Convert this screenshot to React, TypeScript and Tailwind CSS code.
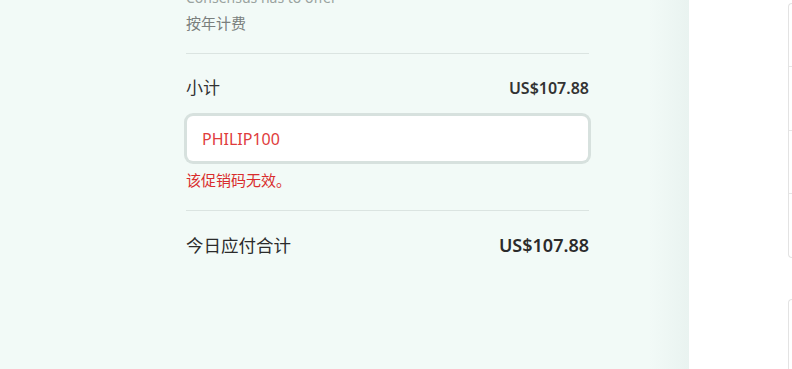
export default function App() {
  const font = { fontFamily: '"Noto Sans", "Noto Sans CJK SC", sans-serif' }

  return (
    <div className="flex h-[369px] w-[792px] overflow-hidden bg-white" style={font}>
      <div className="relative w-[689px] shrink-0 bg-[#f2faf7]">
        <div className="pointer-events-none absolute right-0 top-0 h-full w-[40px] bg-gradient-to-r from-transparent to-[#e9f3f0]" />
        <div className="ml-[186px] w-[403px] -mt-[12px]">
          <div className="text-[14px] leading-[20px] text-[#9aa3a0]">Consensus has to offer</div>
          <div className="mt-[4px] text-[15px] leading-[22px] text-[#7a7f7d]">按年计费</div>
          <div className="mt-[19px] border-t border-[#dbe4e1]" />
          <div className="mt-[21px] flex items-center justify-between text-[#333]">
            <span className="text-[17px] leading-[26px]">小计</span>
            <span className="text-[16px] font-semibold leading-[26px]">US$107.88</span>
          </div>
          <div className="mt-[12px] -mx-[2px] rounded-[9px] bg-[#d7e1de] p-[3px]">
            <div className="flex h-[45px] items-center rounded-[6px] bg-white px-[15px] text-[16px] text-[#e03c3c]">
              PHILIP100
            </div>
          </div>
          <div className="mt-[5px] text-[15px] leading-[22px] text-[#d92d2d]">该促销码无效。</div>
          <div className="mt-[19px] border-t border-[#dbe4e1]" />
          <div className="mt-[21px] flex items-center justify-between text-[#2b2b2b]">
            <span className="text-[17.5px] leading-[26px]">今日应付合计</span>
            <span className="text-[18px] font-semibold leading-[26px]">US$107.88</span>
          </div>
        </div>
      </div>
      <div className="flex-1 pl-[99px]">
        <div className="mt-[3px] h-[255px] rounded-l-[8px] border border-r-0 border-[#e3e3e3]">
          <div className="h-[63px] border-b border-[#e6e6e6]" />
          <div className="h-[64px] border-b border-[#e6e6e6]" />
          <div className="h-[63px] border-b border-[#e6e6e6]" />
        </div>
        <div className="mt-[41px] h-[80px] rounded-l-[8px] border border-r-0 border-[#e3e3e3]" />
      </div>
    </div>
  )
}
